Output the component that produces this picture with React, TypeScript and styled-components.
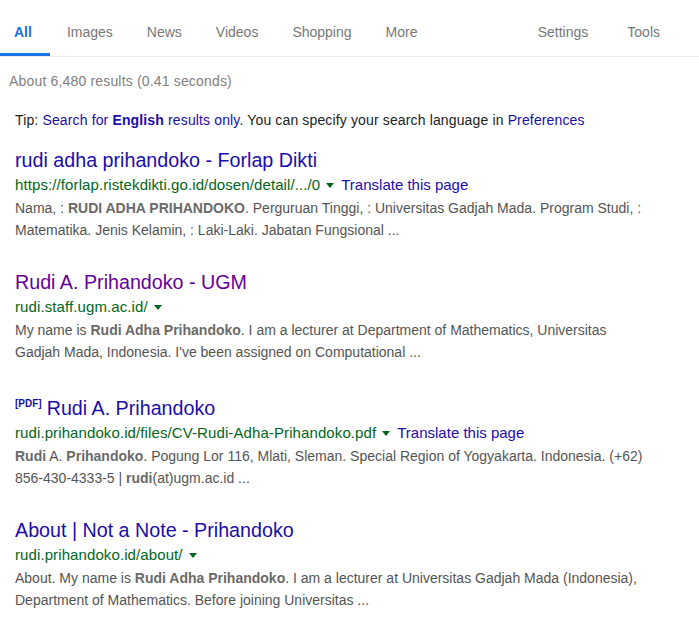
import React from "react";
import styled, { createGlobalStyle } from "styled-components";

const Global = createGlobalStyle`
  html, body { margin: 0; padding: 0; background: #fff; }
  body { font-family: "Liberation Sans", Arial, sans-serif; }
  * { box-sizing: border-box; }
`;

const Page = styled.div`
  width: 699px;
  display: flex;
  flex-direction: column;
`;

const Nav = styled.nav`
  height: 57px;
  border-bottom: 1px solid #ebebeb;
  display: flex;
  align-items: stretch;
`;

const TabGroup = styled.div<{ $right?: boolean }>`
  display: flex;
  align-items: stretch;
  margin-left: ${(p) => (p.$right ? "auto" : "0")};
  margin-right: ${(p) => (p.$right ? "39px" : "0")};
`;

const Tab = styled.a<{ $active?: boolean; $pl?: number; $pr?: number }>`
  display: flex;
  align-items: center;
  padding: 10px ${(p) => p.$pr ?? 17}px 0 ${(p) => p.$pl ?? 17}px;
  font-size: 14px;
  color: ${(p) => (p.$active ? "#1a73e8" : "#777")};
  font-weight: ${(p) => (p.$active ? "bold" : "normal")};
  text-decoration: none;
  border-bottom: 3px solid ${(p) => (p.$active ? "#1a73e8" : "transparent")};
  white-space: nowrap;
`;

const Stats = styled.div`
  margin: 14px 0 0 9px;
  font-size: 14px;
  line-height: 20px;
  letter-spacing: 0.17px;
  color: #808080;
`;

const Tip = styled.div`
  margin: 18px 0 0 15px;
  font-size: 14px;
  line-height: 22px;
  letter-spacing: 0.14px;
  color: #222;
`;

const Link = styled.a<{ $bold?: boolean }>`
  color: #1a0dab;
  text-decoration: none;
  font-weight: ${(p) => (p.$bold ? "bold" : "normal")};
`;

const Results = styled.div`
  margin: 16px 0 0 15px;
  display: flex;
  flex-direction: column;
  gap: 28px;
`;

const Result = styled.div`
  display: flex;
  flex-direction: column;
`;

const Title = styled.a<{ $visited?: boolean }>`
  font-size: 19.7px;
  line-height: 26px;
  color: ${(p) => (p.$visited ? "#660099" : "#1a0dab")};
  text-decoration: none;
  white-space: nowrap;
`;

const FileType = styled.span`
  font-size: 10px;
  font-weight: bold;
  color: #1a0dab;
  vertical-align: 8px;
  margin-right: 5px;
`;

const UrlLine = styled.div`
  font-size: 15px;
  line-height: 24px;
  display: flex;
  align-items: center;
  white-space: nowrap;
`;

const Cite = styled.cite`
  font-style: normal;
  color: #006621;
  letter-spacing: 0.1px;
`;

const Arrow = styled.span`
  display: inline-block;
  width: 0;
  height: 0;
  border-left: 4.5px solid transparent;
  border-right: 4.5px solid transparent;
  border-top: 5px solid #006621;
  margin: 1px 7px 0 6px;
`;

const Snippet = styled.div`
  font-size: 14px;
  line-height: 22px;
  color: #545454;
  white-space: nowrap;
  b { color: #6a6a6a; }
`;

const tabs = [
  { label: "All", active: true, pl: 14, pr: 18 },
  { label: "Images" },
  { label: "News" },
  { label: "Videos" },
  { label: "Shopping" },
  { label: "More" },
];

export default function App() {
  return (
    <Page>
      <Global />
      <Nav>
        <TabGroup>
          {tabs.map((t) => (
            <Tab key={t.label} $active={t.active} $pl={t.pl} $pr={t.pr}>
              {t.label}
            </Tab>
          ))}
        </TabGroup>
        <TabGroup $right>
          <Tab $pl={0} $pr={39}>Settings</Tab>
          <Tab $pl={0} $pr={0}>Tools</Tab>
        </TabGroup>
      </Nav>
      <Stats>About 6,480 results (0.41 seconds)</Stats>
      <Tip>
        Tip: <Link>Search for <Link $bold>English</Link> results only</Link>. You can specify your search
        language in <Link>Preferences</Link>
      </Tip>
      <Results>
        <Result>
          <Title>rudi adha prihandoko - Forlap Dikti</Title>
          <UrlLine>
            <Cite>https://forlap.ristekdikti.go.id/dosen/detail/.../0</Cite>
            <Arrow />
            <Link>Translate this page</Link>
          </UrlLine>
          <Snippet>
            Nama, : <b>RUDI ADHA PRIHANDOKO</b>. Perguruan Tinggi, : Universitas Gadjah Mada. Program Studi, :
            <br />
            Matematika. Jenis Kelamin, : Laki-Laki. Jabatan Fungsional ...
          </Snippet>
        </Result>
        <Result>
          <Title $visited>Rudi A. Prihandoko - UGM</Title>
          <UrlLine>
            <Cite>rudi.staff.ugm.ac.id/</Cite>
            <Arrow />
          </UrlLine>
          <Snippet>
            My name is <b>Rudi Adha Prihandoko</b>. I am a lecturer at Department of Mathematics, Universitas
            <br />
            Gadjah Mada, Indonesia. I've been assigned on Computational ...
          </Snippet>
        </Result>
        <Result>
          <Title>
            <FileType>[PDF]</FileType>Rudi A. Prihandoko
          </Title>
          <UrlLine>
            <Cite>rudi.prihandoko.id/files/CV-Rudi-Adha-Prihandoko.pdf</Cite>
            <Arrow />
            <Link>Translate this page</Link>
          </UrlLine>
          <Snippet>
            <b>Rudi</b> A. <b>Prihandoko</b>. Pogung Lor 116, Mlati, Sleman. Special Region of Yogyakarta. Indonesia. (+62)
            <br />
            856-430-4333-5 | <b>rudi</b>(at)ugm.ac.id ...
          </Snippet>
        </Result>
        <Result>
          <Title>About | Not a Note - Prihandoko</Title>
          <UrlLine>
            <Cite>rudi.prihandoko.id/about/</Cite>
            <Arrow />
          </UrlLine>
          <Snippet>
            About. My name is <b>Rudi Adha Prihandoko</b>. I am a lecturer at Universitas Gadjah Mada (Indonesia),
            <br />
            Department of Mathematics. Before joining Universitas ...
          </Snippet>
        </Result>
      </Results>
    </Page>
  );
}
